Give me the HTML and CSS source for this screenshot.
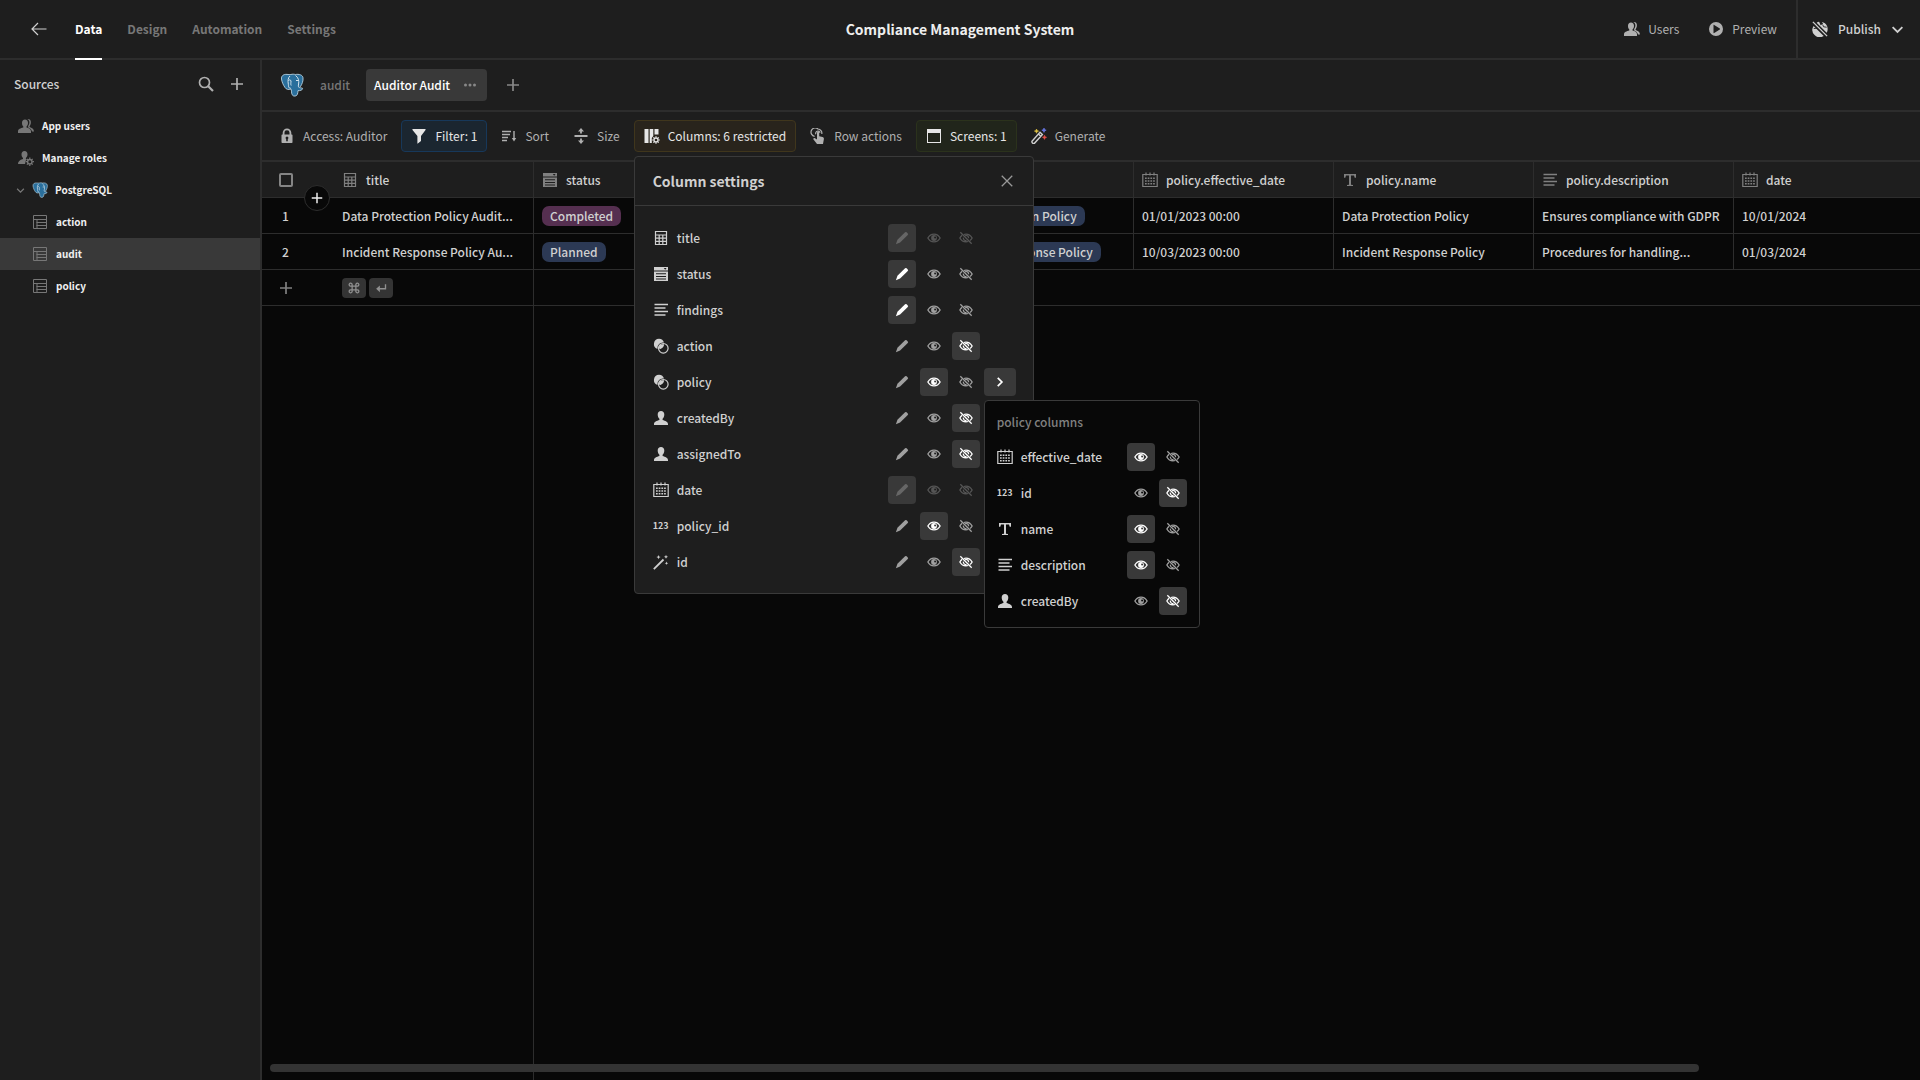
FILE: index.html
```html
<!DOCTYPE html>
<html lang="en">
<head>
<meta charset="utf-8">
<meta name="viewport" content="width=device-width, initial-scale=1">
<title>Compliance Management System</title>
<link rel="stylesheet" href="styles.css">
</head>
<body>
<svg class="sprite" aria-hidden="true">
  <symbol id="i-back" viewBox="0 0 16 16"><path d="M15.500 8H1M7 2L1 8l6 6" fill="none" stroke="currentColor" stroke-width="1.200"/></symbol>
  <symbol id="i-search" viewBox="0 0 16 16"><circle cx="6.500" cy="6.500" r="5" fill="none" stroke="currentColor" stroke-width="1.700"/><path d="M10 10l5 5" stroke="currentColor" stroke-width="2.200"/></symbol>
  <symbol id="i-plus" viewBox="0 0 16 16"><path d="M8 2v12M2 8h12" stroke="currentColor" stroke-width="1.700"/></symbol>
  <symbol id="i-close" viewBox="0 0 16 16"><path d="M2 2l12 12M14 2L2 14" stroke="currentColor" stroke-width="1.500"/></symbol>
  <symbol id="i-down" viewBox="0 0 16 16"><path d="M2 5l6 6 6-6" fill="none" stroke="currentColor" stroke-width="2.200"/></symbol>
  <symbol id="i-right" viewBox="0 0 16 16"><path d="M5 2.500L10.500 8 5 13.500" fill="none" stroke="currentColor" stroke-width="2.300"/></symbol>
  <symbol id="i-dots" viewBox="0 0 16 16"><circle cx="3.500" cy="8" r="1.500"/><circle cx="8" cy="8" r="1.500"/><circle cx="12.500" cy="8" r="1.500"/></symbol>
  <symbol id="i-user" viewBox="0 0 16 16"><path d="M8 1c2 0 3.300 1.400 3.300 3.600 0 1.800-.700 3.300-1.700 4.200v1.100c2.600.800 5.400 1.700 5.400 4V15H1v-1.100c0-2.300 2.800-3.200 5.400-4V8.800c-1-.900-1.700-2.400-1.700-4.200C4.700 2.400 6 1 8 1z"/></symbol>
  <symbol id="i-users" viewBox="0 0 16 16"><path d="M7 1.500c1.900 0 3 1.300 3 3.300 0 1.700-.600 3-1.500 3.800v1c2.300.700 4.500 1.600 4.500 3.700V15H0v-1.700c0-2.100 2.700-3 5.300-3.700v-1C4.400 7.800 4 6.500 4 4.800c0-2 1.100-3.300 3-3.300z"/><path d="M9.300 1c2.500-.3 3.800 1.200 3.600 3.600-.100 1.600-.600 2.800-1.300 3.600v.9c2.200.8 4.300 1.900 4.400 4.400h-2c-.300-2.200-2-3.300-3.800-4.100l-.100-1.500c.8-1 1.300-2.200 1.300-3.700 0-1.400-.900-2.700-2.100-3.200z"/></symbol>
  <symbol id="i-role" viewBox="0 0 16 16"><path d="M6.500 1c1.900 0 3 1.300 3 3.200 0 1.700-.700 3-1.600 3.700v1l1 .4a4.800 4.800 0 00-1.800 4.700H0c0-2.800 1.600-4 5-5.100v-1C4.100 7.200 3.500 5.900 3.500 4.200 3.500 2.300 4.600 1 6.500 1z"/><circle cx="11.800" cy="11.700" r="2.200" fill="none" stroke="currentColor" stroke-width="1.400"/><path d="M11.800 7.500v1.600M11.800 14.300v1.600M7.600 11.700h1.600M14.400 11.700H16M8.900 8.800l1 1M13.700 13.600l1 1M8.900 14.600l1-1M13.700 9.800l1-1" stroke="currentColor" stroke-width="1.200"/></symbol>
  <symbol id="i-table" viewBox="0 0 16 16"><path d="M1.500 1.500h13v13h-13zM1.500 5.500h13M4.500 8.500h10M4.500 11.500h10M5 5.500v9" fill="none" stroke="currentColor"/></symbol>
  <symbol id="i-pg" viewBox="0 0 24 24"><path d="M1.500 6C1.100 3 3.500 1 7 1.400c1.500.2 2.800.3 3.900.1 1.500-.5 3.100-.3 4.500 0 3.400-.6 7.300.3 7.600 3.300.4 3-1 6.500-2.600 8.800l-.700 1.100c1 .3 2.500.1 2.900.7.200 1.500-2.600 2.500-4.600 2.200-.200 2.300-.3 5.300-3 5.500-2.800.2-3.500-2-3.500-5l-.400-2C8.400 16.900 6.300 16.500 5 14.500 3.300 12 1.900 9 1.500 6z" fill="#2a6f9c" stroke="#b9d1df" stroke-width=".9"/><path d="M10 3C8 4.500 7.700 8 8.300 11c.4 2-.5 4 2.500 4.300M15.500 2.500c3 2 3.700 5.500 3.100 8.500-.3 1.500-.500 2.500.400 3.500M8.500 7.500c1-.9 2-.9 2.500.5 0 2-.5 3 .2 4.500M16 7.500h2.500" fill="none" stroke="#d5e4ed" stroke-width="1"/></symbol>
  <symbol id="i-lock" viewBox="0 0 16 16"><path d="M4.600 7V4.800a3.400 3.400 0 016.800 0V7" fill="none" stroke="currentColor" stroke-width="1.800"/><path fill-rule="evenodd" d="M3.200 6.500h9.600a.7.7 0 01.7.7v7.100a.7.7 0 01-.7.700H3.200a.7.7 0 01-.7-.7V7.200a.7.7 0 01.7-.7zm4 4.700v2h1.600v-2a1.400 1.400 0 10-1.600 0z"/></symbol>
  <symbol id="i-filter" viewBox="0 0 16 16"><path d="M2 1h12a.6.6 0 01.5 1L10 8V13l-3.200 2.600a.3.3 0 01-.4-.3V8L1.500 2A.6.6 0 012 1z"/></symbol>
  <symbol id="i-sort" viewBox="0 0 16 16"><path d="M1 3.500h9M1 6.500h8M1 9.500h6M1 12.500h5M13 3v8" stroke="currentColor" stroke-width="1.400"/><path d="M10.800 10h4.400L13 13.500z"/></symbol>
  <symbol id="i-size" viewBox="0 0 16 16"><path d="M1.500 8h13M8 2v3.500M8 10.500V14" stroke="currentColor" stroke-width="1.800"/><path d="M5 3.600L8 0l3 3.600zM5 12.400L8 16l3-3.600z"/></symbol>
  <symbol id="i-cols" viewBox="0 0 16 16"><path d="M.5 1h4v14h-4zM5.700 1h3.600v7l-1.500 2v5H5.700zM10.500 1h4v5.500h-4z"/><circle cx="12" cy="12" r="2" fill="none" stroke="currentColor" stroke-width="1.300"/><path d="M12 8.200v1.400M12 14.400v1.400M8.200 12h1.400M14.400 12h1.400M9.400 9.400l1 1M13.700 13.700l1 1M9.400 14.600l1-1M13.700 10.300l1-1" stroke="currentColor" stroke-width="1.200"/></symbol>
  <symbol id="i-tap" viewBox="0 0 16 16"><path d="M4.600 8.300A4.200 4.200 0 118 1a4.200 4.200 0 013.800 5M5.800 6.200a2.200 2.200 0 114.300-1.500" fill="none" stroke="currentColor" stroke-width="1.200"/><path d="M7 4.800a1.100 1.100 0 012.200 0v3.400l3.300.9c1 .2 1.500.9 1.400 1.900L13 16H7L3.500 11.600c-.8-1 .5-2.200 1.500-1.400l2 1.300z"/></symbol>
  <symbol id="i-screen" viewBox="0 0 16 16"><path fill-rule="evenodd" d="M1 1h14v14H1zm1 4v9h12V5z"/></symbol>
  <symbol id="i-gen" viewBox="0 0 16 16"><path d="M1 13.200L9 4.300l2.400 2.200-8 8.800q-1.200.5-2-.3-.8-.8-.4-1.800zM7.500 6l2.300 2.200" fill="none" stroke="#cfcfcf" stroke-width="1.400"/><path d="M5.500 1l.6 1.500 1.500.6-1.500.6-.6 1.500-.6-1.500-1.500-.6 1.500-.6z" fill="#e0c341" stroke="#e0c341" stroke-width=".6"/><path d="M13 0l.6 1.600 1.600.6-1.600.6L13 4.400l-.6-1.600-1.600-.6 1.600-.6z" fill="#6d7cf0" stroke="#6d7cf0" stroke-width=".6"/><path d="M13.500 7.200l.6 1.500 1.500.6-1.500.6-.6 1.500-.6-1.500-1.500-.6 1.500-.6z" fill="#e8524a" stroke="#e8524a" stroke-width=".6"/></symbol>
  <symbol id="i-play" viewBox="0 0 16 16"><path fill-rule="evenodd" d="M8 1a7 7 0 110 14A7 7 0 018 1zM5.500 4.200v7.600c0 .4.400.5.700.3l5.600-3.700a.5.500 0 000-.8L6.200 3.900c-.3-.2-.7-.1-.7.300z"/></symbol>
  <symbol id="i-globe" viewBox="0 0 18 18"><path d="M1.800 5.500l11.400 11.300A8.200 8.200 0 011.800 5.500zM5.200 2L16.500 13.200A8.200 8.200 0 0011 1l1.500 2.200-2.800 1.500L8 .9A8 8 0 005.200 2z"/><path d="M1 1l16 16" stroke="currentColor" stroke-width="1.500"/><path d="M2 8.500l3.500-.5M12 4l1 2.500 3.500.5" stroke="#1e1e1e" fill="none"/></symbol>
  <symbol id="i-calc" viewBox="0 0 16 16"><path d="M2.500 1.500h11v13h-11zM2.500 5h11M2.500 8.200h11M2.500 11.400h11M6.200 5v9.500M9.800 5v9.500" fill="none" stroke="currentColor" stroke-width="1.200"/></symbol>
  <symbol id="i-select" viewBox="0 0 16 16"><path fill-rule="evenodd" d="M1 1h14v3.500H1zm9.800.9L12.200 3.700l1.400-1.800zM1 5.500h14V15H1zm2 1.700v1h10v-1zm0 2.700v1h10v-1zm0 2.700v1h10v-1z"/></symbol>
  <symbol id="i-para" viewBox="0 0 16 16"><path d="M1.500 2.500h13.500M1.500 6h11M1.500 9.500h13.500M1.500 13h11" stroke="currentColor" stroke-width="1.500"/></symbol>
  <symbol id="i-rel" viewBox="0 0 16 16"><path d="M6 .8a5.200 5.200 0 015 3.800 5.600 5.600 0 00-6.600 6.300A5.200 5.200 0 016 .8z"/><circle cx="10.300" cy="10.300" r="4.800" fill="none" stroke="currentColor" stroke-width="1.200"/><path d="M6 8.500a4 4 0 013.500-2.200h1.600c0 2.300-2 4.700-4.600 4.800A5 5 0 016 8.500z"/></symbol>
  <symbol id="i-date" viewBox="0 0 16 16"><path d="M.8 2.500h14.400v12H.8zM4 .5v3M8 .5v3M12 .5v3" fill="none" stroke="currentColor" stroke-width="1.200"/><path d="M3 6.300h10M3 9h10M3 11.700h10" stroke="currentColor" stroke-width="1.500" stroke-dasharray="1.700 1"/></symbol>
  <symbol id="i-text" viewBox="0 0 16 16"><path d="M2 2h12v3.700h-1.300L12 3.500H9v9.200l2 .4V14H5v-.9l2-.4V3.500H4l-.7 2.200H2z"/></symbol>
  <symbol id="i-wand" viewBox="0 0 16 16"><path d="M.8 15.200L10.500 5.500" stroke="currentColor" stroke-width="1.800"/><path d="M5.500 1l.6 1.500 1.500.6-1.500.6-.6 1.500-.6-1.500-1.500-.6 1.500-.6zM13 .8l.6 1.400 1.400.6-1.400.6-.6 1.400-.6-1.400-1.400-.6 1.400-.6zM13.500 7.500l.5 1.300 1.300.5-1.300.5-.5 1.300-.5-1.300-1.300-.5 1.300-.5z"/></symbol>
  <symbol id="i-edit" viewBox="0 0 16 16"><path d="M11.500 1.500q.9-.8 1.800 0l1.300 1.300q.8.9 0 1.800L5.800 13.200 1 15l1.800-5z"/></symbol>
  <symbol id="i-eye" viewBox="0 0 16 16"><path d="M1 8c1.500-2.800 4-4.500 7-4.500s5.500 1.700 7 4.500c-1.500 2.800-4 4.500-7 4.500S2.500 10.800 1 8z" fill="none" stroke="currentColor" stroke-width="1.500"/><path fill-rule="evenodd" d="M8 4.700a3.300 3.300 0 110 6.600 3.300 3.300 0 010-6.600zm1.200 1.600a1.100 1.100 0 10.100 2.200 1.100 1.100 0 00-.1-2.200z"/></symbol>
  <symbol id="i-off" viewBox="0 0 16 16"><path d="M3.500 5C2.400 5.800 1.600 6.900 1 8c1.500 2.800 4 4.500 7 4.500.9 0 1.800-.2 2.600-.5M5.500 4c.8-.3 1.600-.5 2.500-.5 3 0 5.500 1.700 7 4.500-.6 1.100-1.400 2.100-2.400 2.900M5 7.500a3 3 0 003.600 3.400M7 5.200A3 3 0 0111 8.300" fill="none" stroke="currentColor" stroke-width="1.500"/><path d="M1.500 1.500l13 13" stroke="currentColor" stroke-width="1.500"/></symbol>
  <symbol id="i-cmd" viewBox="0 0 16 16"><path d="M5.500 5.500h5v5h-5zM5.500 5.500h-1.500a2 2 0 111.500-2zM10.500 5.500V4a2 2 0 111.500 1.500zM10.500 10.500H12a2 2 0 11-1.500 1.500zM5.500 10.500V12A2 2 0 114 10.500z" fill="none" stroke="currentColor" stroke-width="1.700"/></symbol>
  <symbol id="i-enter" viewBox="0 0 16 16"><path d="M14 3v6H4" fill="none" stroke="currentColor" stroke-width="1.800"/><path d="M6.500 4.500v9L1.500 9z"/></symbol>
</svg>

<header class="topbar">
  <div class="topbar-side">
    <button class="back" aria-label="Back"><svg class="icon"><use href="#i-back"/></svg></button>
    <nav class="tabs">
      <a href="#" class="tab active">Data</a>
      <a href="#" class="tab">Design</a>
      <a href="#" class="tab">Automation</a>
      <a href="#" class="tab">Settings</a>
    </nav>
  </div>
  <h1 class="app-name">Compliance Management System</h1>
  <div class="topbar-side end">
    <button class="top-action"><svg class="icon"><use href="#i-users"/></svg>Users</button>
    <button class="top-action"><svg class="icon"><use href="#i-play"/></svg>Preview</button>
    <button class="publish"><svg class="icon"><use href="#i-globe"/></svg>Publish<svg class="icon small"><use href="#i-down"/></svg></button>
  </div>
</header>

<div class="workspace">
  <aside class="sidebar">
    <div class="sources">
      <span class="sources-title">Sources</span>
      <button aria-label="Search"><svg class="icon"><use href="#i-search"/></svg></button>
      <button aria-label="Add source"><svg class="icon"><use href="#i-plus"/></svg></button>
    </div>
    <nav class="tree">
      <a href="#" class="node"><svg class="icon"><use href="#i-users"/></svg>App users</a>
      <a href="#" class="node"><svg class="icon"><use href="#i-role"/></svg>Manage roles</a>
      <a href="#" class="node source"><svg class="icon tiny"><use href="#i-down"/></svg><svg class="icon"><use href="#i-pg"/></svg>PostgreSQL</a>
      <a href="#" class="node child"><svg class="icon"><use href="#i-table"/></svg>action</a>
      <a href="#" class="node child selected"><svg class="icon"><use href="#i-table"/></svg>audit</a>
      <a href="#" class="node child"><svg class="icon"><use href="#i-table"/></svg>policy</a>
    </nav>
  </aside>

  <main class="content">
    <div class="viewbar">
      <svg class="icon large"><use href="#i-pg"/></svg>
      <a href="#" class="view">audit</a>
      <div class="view current">Auditor Audit<button aria-label="View options"><svg class="icon"><use href="#i-dots"/></svg></button></div>
      <button class="add-view" aria-label="Add view"><svg class="icon"><use href="#i-plus"/></svg></button>
    </div>

    <div class="toolbar">
      <button class="tool"><svg class="icon"><use href="#i-lock"/></svg>Access: Auditor</button>
      <button class="tool blue"><svg class="icon"><use href="#i-filter"/></svg>Filter: 1</button>
      <button class="tool"><svg class="icon"><use href="#i-sort"/></svg>Sort</button>
      <button class="tool"><svg class="icon"><use href="#i-size"/></svg>Size</button>
      <div class="anchor">
        <button class="tool amber"><svg class="icon"><use href="#i-cols"/></svg>Columns: 6 restricted</button>
        <section class="popover" aria-label="Column settings">
          <header class="popover-head"><h2>Column settings</h2><button aria-label="Close"><svg class="icon"><use href="#i-close"/></svg></button></header>
          <ul class="columns">
            <li><svg class="icon"><use href="#i-calc"/></svg><span class="name">title</span><button class="perm on" disabled aria-label="Edit"><svg class="icon"><use href="#i-edit"/></svg></button><button class="perm" disabled aria-label="Read"><svg class="icon"><use href="#i-eye"/></svg></button><button class="perm" disabled aria-label="Hide"><svg class="icon"><use href="#i-off"/></svg></button></li>
            <li><svg class="icon"><use href="#i-select"/></svg><span class="name">status</span><button class="perm on" aria-label="Edit"><svg class="icon"><use href="#i-edit"/></svg></button><button class="perm" aria-label="Read"><svg class="icon"><use href="#i-eye"/></svg></button><button class="perm" aria-label="Hide"><svg class="icon"><use href="#i-off"/></svg></button></li>
            <li><svg class="icon"><use href="#i-para"/></svg><span class="name">findings</span><button class="perm on" aria-label="Edit"><svg class="icon"><use href="#i-edit"/></svg></button><button class="perm" aria-label="Read"><svg class="icon"><use href="#i-eye"/></svg></button><button class="perm" aria-label="Hide"><svg class="icon"><use href="#i-off"/></svg></button></li>
            <li><svg class="icon"><use href="#i-rel"/></svg><span class="name">action</span><button class="perm" aria-label="Edit"><svg class="icon"><use href="#i-edit"/></svg></button><button class="perm" aria-label="Read"><svg class="icon"><use href="#i-eye"/></svg></button><button class="perm on" aria-label="Hide"><svg class="icon"><use href="#i-off"/></svg></button></li>
            <li><svg class="icon"><use href="#i-rel"/></svg><span class="name">policy</span><button class="perm" aria-label="Edit"><svg class="icon"><use href="#i-edit"/></svg></button><button class="perm on" aria-label="Read"><svg class="icon"><use href="#i-eye"/></svg></button><button class="perm" aria-label="Hide"><svg class="icon"><use href="#i-off"/></svg></button>
              <div class="anchor">
                <button class="perm on wide" aria-label="Related columns"><svg class="icon"><use href="#i-right"/></svg></button>
                <section class="submenu">
                  <h3>policy columns</h3>
                  <ul class="columns related">
                    <li><svg class="icon"><use href="#i-date"/></svg><span class="name">effective_date</span><button class="perm on" aria-label="Read"><svg class="icon"><use href="#i-eye"/></svg></button><button class="perm" aria-label="Hide"><svg class="icon"><use href="#i-off"/></svg></button></li>
                    <li><span class="num">123</span><span class="name">id</span><button class="perm" aria-label="Read"><svg class="icon"><use href="#i-eye"/></svg></button><button class="perm on" aria-label="Hide"><svg class="icon"><use href="#i-off"/></svg></button></li>
                    <li><svg class="icon"><use href="#i-text"/></svg><span class="name">name</span><button class="perm on" aria-label="Read"><svg class="icon"><use href="#i-eye"/></svg></button><button class="perm" aria-label="Hide"><svg class="icon"><use href="#i-off"/></svg></button></li>
                    <li><svg class="icon"><use href="#i-para"/></svg><span class="name">description</span><button class="perm on" aria-label="Read"><svg class="icon"><use href="#i-eye"/></svg></button><button class="perm" aria-label="Hide"><svg class="icon"><use href="#i-off"/></svg></button></li>
                    <li><svg class="icon"><use href="#i-user"/></svg><span class="name">createdBy</span><button class="perm" aria-label="Read"><svg class="icon"><use href="#i-eye"/></svg></button><button class="perm on" aria-label="Hide"><svg class="icon"><use href="#i-off"/></svg></button></li>
                  </ul>
                </section>
              </div>
            </li>
            <li><svg class="icon"><use href="#i-user"/></svg><span class="name">createdBy</span><button class="perm" aria-label="Edit"><svg class="icon"><use href="#i-edit"/></svg></button><button class="perm" aria-label="Read"><svg class="icon"><use href="#i-eye"/></svg></button><button class="perm on" aria-label="Hide"><svg class="icon"><use href="#i-off"/></svg></button></li>
            <li><svg class="icon"><use href="#i-user"/></svg><span class="name">assignedTo</span><button class="perm" aria-label="Edit"><svg class="icon"><use href="#i-edit"/></svg></button><button class="perm" aria-label="Read"><svg class="icon"><use href="#i-eye"/></svg></button><button class="perm on" aria-label="Hide"><svg class="icon"><use href="#i-off"/></svg></button></li>
            <li><svg class="icon"><use href="#i-date"/></svg><span class="name">date</span><button class="perm on" disabled aria-label="Edit"><svg class="icon"><use href="#i-edit"/></svg></button><button class="perm" disabled aria-label="Read"><svg class="icon"><use href="#i-eye"/></svg></button><button class="perm" disabled aria-label="Hide"><svg class="icon"><use href="#i-off"/></svg></button></li>
            <li><span class="num">123</span><span class="name">policy_id</span><button class="perm" aria-label="Edit"><svg class="icon"><use href="#i-edit"/></svg></button><button class="perm on" aria-label="Read"><svg class="icon"><use href="#i-eye"/></svg></button><button class="perm" aria-label="Hide"><svg class="icon"><use href="#i-off"/></svg></button></li>
            <li><svg class="icon"><use href="#i-wand"/></svg><span class="name">id</span><button class="perm" aria-label="Edit"><svg class="icon"><use href="#i-edit"/></svg></button><button class="perm" aria-label="Read"><svg class="icon"><use href="#i-eye"/></svg></button><button class="perm on" aria-label="Hide"><svg class="icon"><use href="#i-off"/></svg></button></li>
          </ul>
        </section>
      </div>
      <button class="tool"><svg class="icon"><use href="#i-tap"/></svg>Row actions</button>
      <button class="tool green"><svg class="icon"><use href="#i-screen"/></svg>Screens: 1</button>
      <button class="tool"><svg class="icon"><use href="#i-gen"/></svg>Generate</button>
    </div>

    <div class="grid">
      <table>
        <colgroup><col class="col-gutter"><col class="col"><col class="col"><col class="col"><col class="col"><col class="col"><col class="col"><col class="col"><col></colgroup>
        <thead>
          <tr>
            <th class="gutter"><input type="checkbox" aria-label="Select all rows"><button class="insert" aria-label="Insert row"><svg class="icon"><use href="#i-plus"/></svg></button></th>
            <th><div class="head"><svg class="icon"><use href="#i-calc"/></svg>title</div></th>
            <th><div class="head"><svg class="icon"><use href="#i-select"/></svg>status</div></th>
            <th><div class="head"><svg class="icon"><use href="#i-para"/></svg>findings</div></th>
            <th><div class="head"><svg class="icon"><use href="#i-rel"/></svg>policy</div></th>
            <th><div class="head"><svg class="icon"><use href="#i-date"/></svg>policy.effective_date</div></th>
            <th><div class="head"><svg class="icon"><use href="#i-text"/></svg>policy.name</div></th>
            <th><div class="head"><svg class="icon"><use href="#i-para"/></svg>policy.description</div></th>
            <th><div class="head"><svg class="icon"><use href="#i-date"/></svg>date</div></th>
          </tr>
        </thead>
        <tbody>
          <tr><td class="gutter">1</td><td>Data Protection Policy Audit...</td><td><span class="pill plum">Completed</span></td><td></td><td><span class="pill">Data Protection Policy</span></td><td>01/01/2023 00:00</td><td>Data Protection Policy</td><td>Ensures compliance with GDPR</td><td>10/01/2024</td></tr>
          <tr><td class="gutter">2</td><td>Incident Response Policy Au...</td><td><span class="pill">Planned</span></td><td></td><td><span class="pill">Incident Response Policy</span></td><td>10/03/2023 00:00</td><td>Incident Response Policy</td><td>Procedures for handling...</td><td>01/03/2024</td></tr>
          <tr class="new-row"><td class="gutter"><button aria-label="Add row"><svg class="icon"><use href="#i-plus"/></svg></button></td><td><div class="keys"><kbd><svg class="icon"><use href="#i-cmd"/></svg></kbd><kbd><svg class="icon"><use href="#i-enter"/></svg></kbd></div></td><td colspan="7"></td></tr>
        </tbody>
      </table>
      <div class="rest"><div class="sticky-edge"></div></div>
      <div class="scroll-track"><div class="scroll-thumb"></div></div>
    </div>
  </main>
</div>
</body>
</html>
```
FILE: styles.css
```css
:root {
  --panel: #1e1e1e;
  --ground: #080808;
  --line: #2d2d2d;
  --raised: #393939;
  --text: #d0d0d0;
  --muted: #b0b0b0;
  --dim: #777;
}

* { box-sizing: border-box; }

body {
  margin: 0;
  height: 100vh;
  display: flex;
  flex-direction: column;
  background: var(--ground);
  color: var(--text);
  font: 500 12px/18px "Noto Sans CJK SC", "Noto Sans", sans-serif;
  overflow: hidden;
}

button {
  display: flex;
  align-items: center;
  justify-content: center;
  margin: 0;
  padding: 0;
  border: 0;
  background: none;
  color: inherit;
  font: inherit;
}

a { color: inherit; text-decoration: none; }
h1, h2, h3, ul { margin: 0; padding: 0; font-size: inherit; }
ul { list-style: none; }

.sprite { position: absolute; width: 0; height: 0; }
.icon { flex: none; display: block; width: 16px; height: 16px; fill: currentColor; }
.icon.small { width: 13px; height: 13px; }
.icon.tiny { width: 9px; height: 9px; }
.icon.large { width: 24px; height: 24px; }

/* Top bar */
.topbar {
  display: flex;
  height: 60px;
  background: var(--panel);
  border-bottom: 2px solid var(--line);
}
.topbar-side { flex: 1; display: flex; }
.topbar-side.end { justify-content: flex-end; color: var(--muted); }
.back { margin: 0 28px 0 31px; }
.tabs { display: flex; gap: 25px; margin-bottom: -2px; }
.tab {
  display: flex;
  align-items: center;
  color: var(--dim);
  font-weight: 700;
  border-bottom: 2px solid transparent;
}
.tab.active { color: #fff; border-color: #fff; }
.app-name { align-self: center; color: #eee; font-size: 14px; line-height: 20px; }
.top-action { gap: 8px; margin-right: 29px; font-weight: 400; }
.top-action + .top-action { margin-right: 19px; }
.publish {
  gap: 10px;
  padding: 0 16px 0 14px;
  border-left: 2px solid var(--line);
  color: var(--text);
}

/* Sidebar */
.workspace { flex: 1; display: flex; min-height: 0; }
.sidebar { flex: none; width: 262px; background: var(--panel); border-right: 2px solid var(--line); }
.sources { display: flex; align-items: center; gap: 15px; height: 48px; padding: 0 15px 0 14px; color: var(--muted); }
.sources-title { flex: 1; color: var(--text); }
.tree { padding-top: 2px; }
.node {
  display: flex;
  align-items: center;
  gap: 8px;
  height: 32px;
  padding-left: 18px;
  color: #f0f0f0;
  font-size: 10px;
  font-weight: 700;
}
.node .icon { color: var(--dim); }
.node.source { gap: 7px; padding-left: 16px; }
.node.child { padding-left: 32px; }
.node.selected { background: var(--raised); }

/* View and tool bars */
.content { flex: 1; min-width: 0; display: flex; flex-direction: column; }
.viewbar {
  display: flex;
  align-items: center;
  height: 52px;
  padding-left: 18px;
  background: var(--panel);
  border-bottom: 2px solid var(--line);
  color: var(--dim);
}
.view { display: flex; align-items: center; margin-left: 16px; }
.view.current {
  gap: 12px;
  height: 32px;
  padding: 0 9px 0 8px;
  border-radius: 4px;
  background: var(--raised);
  color: #fff;
}
.view.current .icon { color: #888; }
.add-view { margin-left: 18px; color: #888; }
.toolbar {
  display: flex;
  align-items: center;
  gap: 4px;
  height: 50px;
  padding-left: 7px;
  background: var(--panel);
  border-bottom: 2px solid var(--line);
}
.tool {
  gap: 8px;
  height: 32px;
  padding: 0 9px;
  border: 1px solid transparent;
  border-radius: 4px;
  color: var(--muted);
  font-weight: 400;
  white-space: nowrap;
}
.tool.blue { background: #1b2630; border-color: #17385a; color: #e6e6e6; }
.tool.amber { background: #29241c; border-color: #40361c; color: #e6e6e6; }
.tool.green { background: #21251b; border-color: #2b321c; color: #e6e6e6; }
.anchor { position: relative; }

/* Column settings */
.popover {
  position: absolute;
  z-index: 2;
  top: calc(100% + 4px);
  left: 0;
  width: 400px;
  background: var(--panel);
  border: 1px solid #3a3a3a;
  border-radius: 4px;
}
.popover-head {
  display: flex;
  align-items: center;
  justify-content: space-between;
  height: 49px;
  padding: 0 19px 0 18px;
  border-bottom: 1px solid #3a3a3a;
}
.popover-head h2 { font-size: 14px; line-height: 20px; }
.popover-head .icon { width: 14px; height: 14px; color: #999; }
.columns { display: flex; flex-direction: column; gap: 8px; padding: 18px 17px 17px 18px; }
.columns li {
  display: grid;
  grid-template-columns: 16px 1fr 28px 28px 28px 32px;
  align-items: center;
  gap: 4px;
}
.name { padding-left: 4px; }
.num { font-size: 9px; font-weight: 700; line-height: 16px; }
.perm { height: 28px; border-radius: 4px; color: #a0a0a0; }
.perm .icon { width: 14px; height: 14px; }
.perm.on { background: var(--raised); color: #fff; }
.perm:disabled { color: #555; }
.perm.on:disabled { color: #666; }
.perm.wide { width: 32px; }
.perm.wide .icon { width: 12px; height: 12px; }
.submenu {
  position: absolute;
  z-index: 3;
  top: calc(100% + 4px);
  left: 0;
  width: 216px;
  padding: 12px;
  background: var(--ground);
  border: 1px solid #3a3a3a;
  border-radius: 4px;
}
.submenu h3 { margin-bottom: 12px; color: #808080; font-weight: 500; }
.columns.related { padding: 0; }
.columns.related li { grid-template-columns: 16px 1fr 28px 28px; }

/* Data grid */
.grid { flex: 1; min-height: 0; display: flex; flex-direction: column; position: relative; overflow: hidden; }
table { width: 100%; min-width: 1658px; table-layout: fixed; border-collapse: separate; border-spacing: 0; }
.col-gutter { width: 72px; }
.col { width: 200px; }
th, td {
  height: 36px;
  padding: 0 8px;
  border-right: 1px solid var(--line);
  border-bottom: 1px solid var(--line);
  text-align: left;
  font-weight: 500;
  white-space: nowrap;
}
th:last-child, td:last-child { border-right: 0; }
th { background: var(--panel); }
.head { display: flex; align-items: center; gap: 8px; }
.head .icon { color: #808080; }
.gutter { position: relative; padding: 0 0 0 17px; border-right: 0; }
td.gutter { padding-left: 20px; }
.new-row .gutter { padding-left: 16px; color: #808080; }
input[type="checkbox"] {
  appearance: none;
  display: block;
  width: 14px;
  height: 14px;
  margin: 0;
  border: 2px solid #858585;
  border-radius: 2px;
}
.insert {
  position: absolute;
  z-index: 1;
  right: 4px;
  bottom: -14px;
  width: 26px;
  height: 26px;
  border: 1px solid var(--line);
  border-radius: 50%;
  background: var(--ground);
  color: #eee;
}
.insert .icon { width: 14px; height: 14px; }
.pill {
  display: inline-block;
  height: 20px;
  padding: 0 8px;
  border-radius: 7px;
  background: #2c3954;
  line-height: 20px;
  vertical-align: middle;
}
.pill.plum { background: #552f50; }
.keys { display: flex; gap: 3px; }
kbd {
  display: flex;
  align-items: center;
  justify-content: center;
  width: 24px;
  height: 20px;
  border-radius: 4px;
  background: #343434;
  color: #909090;
}
kbd .icon { width: 12px; height: 12px; }
.rest { flex: 1; display: flex; }
.sticky-edge { width: 272px; border-right: 1px solid var(--line); }
.scroll-track { position: absolute; left: 8px; right: 8px; bottom: 8px; }
.scroll-thumb { width: 87%; height: 8px; border-radius: 4px; background: #333; }
```
